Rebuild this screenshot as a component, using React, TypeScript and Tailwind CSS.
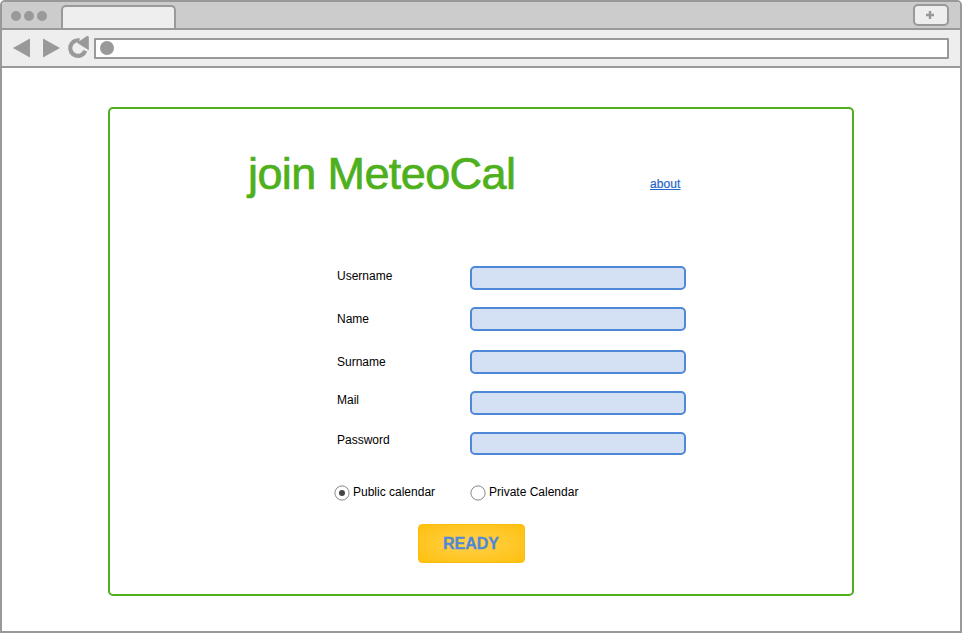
import React from "react";

const fields = [
  { label: "Username", row: "h-6 mb-[17px]", offset: "mt-[3px]" },
  { label: "Name", row: "h-6 mb-[19px]", offset: "mt-[5px]" },
  { label: "Surname", row: "h-6 mb-[17px]", offset: "mt-[5px]" },
  { label: "Mail", row: "h-6 mb-[17px]", offset: "mt-[2px]" },
  { label: "Password", row: "h-[23px]", offset: "mt-[1px]" },
];

function TabBar() {
  return (
    <div className="flex h-7 items-start border-b-2 border-[#999] bg-[#ccc]">
      <div className="ml-[9px] mt-[9px] flex gap-[3px]">
        <span className="size-[10px] rounded-full bg-[#999]" />
        <span className="size-[10px] rounded-full bg-[#999]" />
        <span className="size-[10px] rounded-full bg-[#999]" />
      </div>
      <div className="ml-[14px] mt-[3px] h-[23px] w-[115px] rounded-t-[5px] border-2 border-b-0 border-[#999] bg-[#eee]" />
      <button className="ml-auto mr-[11px] mt-[2px] flex h-[22px] w-9 items-center justify-center rounded-[5px] border-2 border-[#999] bg-[#eee]">
        <svg width="8" height="8" viewBox="0 0 8 8" className="-ml-[2px]">
          <path d="M4 0V8M0 4H8" stroke="#999" strokeWidth="2.5" />
        </svg>
      </button>
    </div>
  );
}

function Toolbar() {
  return (
    <div className="flex h-[38px] items-start border-b-2 border-[#999] bg-[#eee]">
      <svg width="92" height="36" viewBox="2 30 92 36" className="shrink-0" fill="#999">
        <path d="M13 48L30 38.5V57.5Z" />
        <path d="M60 48L43 38.5V57.5Z" />
        <path d="M79.5 40.4A7.8 7.8 0 1 0 85.3 50.8" fill="none" stroke="#999" strokeWidth="4.2" />
        <path d="M77 42.8L86.6 36.2Q88.8 35.2 88.8 37.5V50.2Z" />
      </svg>
      <div className="mr-[11px] mt-2 flex h-[21px] flex-1 items-center rounded-[1px] border-2 border-[#999] bg-white pl-1">
        <span className="-mt-px size-[14px] rounded-full bg-[#999]" />
      </div>
    </div>
  );
}

function Radio({ checked, label }: { checked?: boolean; label: string }) {
  return (
    <label className="flex items-start">
      <svg width="16" height="16" viewBox="0 0 16 16" className="mt-[2px]">
        <circle cx="8" cy="8" r="7.1" fill="#fff" stroke="#888" strokeWidth="1" />
        {checked && <circle cx="8" cy="8" r="3" fill="#444" />}
      </svg>
      <span className="ml-[3px] mt-[2px] whitespace-nowrap leading-[14px]">{label}</span>
    </label>
  );
}

export default function App() {
  return (
    <div className="h-[633px] w-[962px] overflow-hidden rounded-t-[5px] border-2 border-[#999] bg-white font-['Liberation_Sans',Arial,sans-serif] text-xs text-black">
      <TabBar />
      <Toolbar />
      <main className="ml-[106px] mt-[39px] h-[489px] w-[746px] rounded-[5px] border-2 border-[#4eb01c]">
        <header className="flex pl-[138px] pt-[38px]">
          <h1 className="w-[402px] whitespace-nowrap pt-px text-[45px] leading-[52px] tracking-[-0.6px] text-[#4eb01c] [-webkit-text-stroke:0.7px_#4eb01c]">
            join MeteoCal
          </h1>
          <a className="mt-[30px] h-[14px] leading-[14px] tracking-[0.1px] text-[#1f66c8] underline [-webkit-text-stroke:0.2px_#1f66c8]">about</a>
        </header>
        <form className="pl-[227px] pt-[66px]">
          {fields.map((f) => (
            <div key={f.label} className={`flex items-start ${f.row}`}>
              <span className={`w-[133px] leading-[14px] ${f.offset}`}>{f.label}</span>
              <div className="h-full w-[216px] rounded-[5px] border-2 border-[#5088d8] bg-[#d4e1f5]" />
            </div>
          ))}
          <div className="-ml-[3px] mt-[28px] flex h-5">
            <div className="w-[136px]">
              <Radio checked label="Public calendar" />
            </div>
            <Radio label="Private Calendar" />
          </div>
          <button
            type="button"
            className="ml-[81px] mt-[21px] flex h-[39px] w-[107px] items-center justify-center rounded-[4px] border border-[#fcbc0b] bg-[radial-gradient(ellipse_at_center,#ffd04d_0%,#ffc00d_100%)] pr-px text-base font-bold text-[#5088d8] [-webkit-text-stroke:0.3px_#5088d8]"
          >
            READY
          </button>
        </form>
      </main>
    </div>
  );
}
